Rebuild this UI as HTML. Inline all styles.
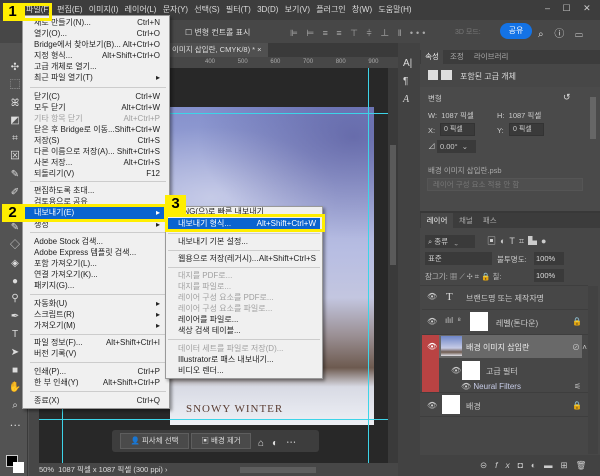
<!DOCTYPE html>
<html><head><meta charset="utf-8"><style>
*{margin:0;padding:0;box-sizing:border-box}
body{width:600px;height:476px;overflow:hidden;background:#535353;font-family:"Liberation Sans","Noto Sans CJK KR",sans-serif;font-size:8px;color:#ddd;position:relative}
.a{position:absolute;white-space:nowrap}
.mi{position:absolute;left:34px;width:126px;height:11px;line-height:11px;color:#222;font-size:8px}
.mi span{position:absolute;right:0}
.sep{position:absolute;height:1px;background:#ccc}
.si{position:absolute;left:178px;height:11px;line-height:11px;color:#222;font-size:8px}
.g{color:#a0a0a0!important}
.y{position:absolute;border:3px solid #ffee00}
.yn{position:absolute;background:#ffee00;color:#000;font-weight:bold;font-size:15px;text-align:center;line-height:18px}
.lt{position:absolute;color:#ccc;font-size:8px}
</style></head><body>
<!-- menubar -->
<div class="a" style="left:0;top:0;width:600px;height:20px;background:#3d3d3d"></div>
<div class="a" style="left:26px;top:4px;color:#ddd;font-size:8px;word-spacing:4px">파일(F) 편집(E) 이미지(I) 레이어(L) 문자(Y) 선택(S) 필터(T) 3D(D) 보기(V) 플러그인 창(W) 도움말(H)</div>
<div class="a" style="left:545px;top:3px;color:#ccc;font-size:9px;word-spacing:10px">– ☐ ✕</div>
<!-- options bar -->
<div class="a" style="left:0;top:20px;width:600px;height:23px;background:#474747"></div>
<div class="a" style="left:185px;top:27px;font-size:8px;color:#ddd">☐ 변형 컨트롤 표시</div>
<div class="a" style="left:290px;top:26px;font-size:9px;color:#aaa;letter-spacing:3px">⊫ ⊨ ≡ ≡ ⊤ ⫩ ⊥ ‖ ••• </div>
<div class="a" style="left:455px;top:27px;font-size:7px;color:#777">3D 모드:</div>
<div class="a" style="left:500px;top:23px;width:32px;height:16px;border-radius:8px;background:#1473e6;color:#fff;text-align:center;line-height:16px;font-size:8px">공유</div>
<div class="a" style="left:538px;top:25px;font-size:10px;color:#ddd;letter-spacing:4px">⌕ ⓘ ▭</div>
<!-- left toolbar -->
<div class="a" style="left:0;top:43px;width:28px;height:433px;background:#535353;border-right:1px solid #3a3a3a"></div>
<div class="a" style="left:8px;top:59px;width:14px;height:390px;overflow:hidden;color:#ddd;font-size:10px;line-height:17.8px;text-align:center">✣<br>⬚<br>ꕤ<br>◩<br>⌗<br>⊠<br>✎<br>✐<br>⊥<br>✎<br>◇<br>◈<br>●<br>⚲<br>✒<br>T<br>➤<br>■<br>✋<br>⌕<br>⋯</div>
<div class="a" style="left:6px;top:455px;width:12px;height:12px;background:#000;border:1px solid #ccc"></div>
<div class="a" style="left:13px;top:462px;width:11px;height:11px;background:#fff"></div>
<!-- doc tab and ruler -->
<div class="a" style="left:29px;top:43px;width:369px;height:14px;background:#3a3a3a"></div>
<div class="a" style="left:160px;top:43px;width:108px;height:14px;background:#505050;color:#ddd;font-size:7.5px;line-height:14px;padding-left:12px">이미지 삽입란, CMYK/8) * ×</div>
<div class="a" style="left:29px;top:57px;width:369px;height:11px;background:#474747;color:#aaa;font-size:6px;line-height:10px;padding-left:176px;word-spacing:21px">400 500 600 700 800 900 1000 1100</div>
<div class="a" style="left:29px;top:68px;width:10px;height:395px;background:#474747"></div>
<!-- canvas -->
<div class="a" style="left:39px;top:68px;width:349px;height:395px;background:#282828"></div>
<div class="a" style="left:170px;top:107px;width:204px;height:318px;background:linear-gradient(180deg,#8490cc 0%,#a3abd9 25%,#b7bde2 45%,#c3c6e0 60%,#9a8f93 72%,#6d5a4f 82%,#d8dae4 88%,#eef0f5 100%)"></div>
<div class="a" style="left:170px;top:107px;width:204px;height:150px;background:radial-gradient(ellipse at 90% 20%,rgba(70,70,140,.55),transparent 60%),radial-gradient(ellipse at 20% 60%,rgba(255,255,255,.35),transparent 55%)"></div>
<div class="a" style="left:186px;top:403px;color:#5a3d33;font-family:'Liberation Serif',serif;font-size:11px;letter-spacing:1px">SNOWY WINTER</div>
<div class="a" style="left:39px;top:113px;width:349px;height:1px;background:#3dd4e8"></div>
<div class="a" style="left:368px;top:68px;width:1px;height:395px;background:#3dd4e8"></div>
<div class="a" style="left:62px;top:68px;width:1px;height:395px;background:#3dd4e8"></div>
<div class="a" style="left:39px;top:419px;width:349px;height:1px;background:#3dd4e8"></div>
<div class="a" style="left:388px;top:68px;width:10px;height:395px;background:#3a3a3a"></div>
<div class="a" style="left:390px;top:145px;width:6px;height:120px;background:#5a5a5a"></div>
<!-- floating bar -->
<div class="a" style="left:112px;top:430px;width:207px;height:22px;background:#3d3d3d;border-radius:3px"></div>
<div class="a" style="left:120px;top:433px;width:69px;height:16px;background:#4a4a4a;border:1px solid #5e5e5e;color:#ddd;font-size:7.5px;line-height:14px;text-align:center">👤 피사체 선택</div>
<div class="a" style="left:191px;top:433px;width:60px;height:16px;background:#4a4a4a;border:1px solid #5e5e5e;color:#ddd;font-size:7.5px;line-height:14px;text-align:center">▣ 배경 제거</div>
<div class="a" style="left:258px;top:434px;color:#ddd;font-size:10px;letter-spacing:8px">⌂◐⋯</div>
<!-- status bar -->
<div class="a" style="left:29px;top:463px;width:369px;height:13px;background:#474747;color:#ddd;font-size:7.5px;line-height:13px;padding-left:10px">50% &nbsp;1087 픽셀 x 1087 픽셀 (300 ppi) ›</div>
<div class="a" style="left:240px;top:467px;width:76px;height:6px;background:#5e5e5e"></div>
<!-- icon strip -->
<div class="a" style="left:398px;top:43px;width:22px;height:433px;background:#424242"></div>
<div class="a" style="left:403px;top:55px;color:#ddd;font-size:10px;line-height:18px">A|<br>¶<br><i style="font-family:'Liberation Serif'">A</i></div>
<!-- properties panel -->
<div class="a" style="left:420px;top:43px;width:180px;height:168px;background:#474747"></div>
<div class="a" style="left:420px;top:50px;width:180px;height:14px;background:#3c3c3c"></div>
<div class="a" style="left:421px;top:50px;width:22px;height:14px;background:#474747;color:#eee;font-size:7.5px;line-height:14px;text-align:center">속성</div>
<div class="a" style="left:450px;top:50px;color:#aaa;font-size:7.5px;line-height:14px;word-spacing:8px">조정 라이브러리</div>
<div class="a" style="left:428px;top:70px;width:10px;height:10px;background:#ddd"></div>
<div class="a" style="left:441px;top:70px;width:11px;height:10px;background:#ddd"></div>
<div class="a" style="left:460px;top:71px;color:#ddd;font-size:8px">포함된 고급 개체</div>
<div class="a" style="left:420px;top:87px;width:180px;height:124px;background:#4a4a4a"></div>
<div class="a" style="left:428px;top:93px;color:#ccc;font-size:7.5px">변형</div>
<div class="a" style="left:563px;top:92px;color:#ddd;font-size:9px">↺</div>
<div class="a" style="left:428px;top:110px;color:#ccc;font-size:7.5px">W: &nbsp;1087 픽셀</div>
<div class="a" style="left:497px;top:110px;color:#ccc;font-size:7.5px">H: &nbsp;1087 픽셀</div>
<div class="a" style="left:428px;top:126px;color:#ccc;font-size:7.5px">X:</div>
<div class="a" style="left:440px;top:123px;width:35px;height:13px;background:#3a3a3a;border:1px solid #333;color:#ccc;font-size:7px;line-height:11px;padding-left:3px">0 픽셀</div>
<div class="a" style="left:497px;top:126px;color:#ccc;font-size:7.5px">Y:</div>
<div class="a" style="left:509px;top:123px;width:35px;height:13px;background:#3a3a3a;border:1px solid #333;color:#ccc;font-size:7px;line-height:11px;padding-left:3px">0 픽셀</div>
<div class="a" style="left:428px;top:141px;color:#ccc;font-size:7.5px">⊿</div>
<div class="a" style="left:437px;top:140px;width:39px;height:13px;background:#3a3a3a;color:#ccc;font-size:7.5px;line-height:13px;padding-left:3px">0.00° &nbsp;⌄</div>
<div class="a" style="left:428px;top:165px;color:#aaa;font-size:7.5px">배경 이미지 삽입란.psb</div>
<div class="a" style="left:427px;top:178px;width:156px;height:13px;background:#4f4f4f;border:1px solid #555;color:#777;font-size:7.5px;line-height:11px;padding-left:5px">레이어 구성 요소 적용 안 함</div>
<div class="a" style="left:590px;top:97px;width:6px;height:42px;background:#666"></div>
<!-- layers panel -->
<div class="a" style="left:420px;top:211px;width:180px;height:2px;background:#383838"></div>
<div class="a" style="left:420px;top:213px;width:180px;height:263px;background:#474747"></div>
<div class="a" style="left:420px;top:213px;width:180px;height:15px;background:#3c3c3c"></div>
<div class="a" style="left:421px;top:213px;width:32px;height:15px;background:#474747;color:#eee;font-size:7.5px;line-height:15px;text-align:center">레이어</div>
<div class="a" style="left:459px;top:213px;color:#aaa;font-size:7.5px;line-height:15px;word-spacing:8px">채널 패스</div>
<div class="a" style="left:425px;top:235px;width:50px;height:13px;background:#3a3a3a;color:#ccc;font-size:7.5px;line-height:13px;padding-left:3px">⌕ 종류 &nbsp;&nbsp;⌄</div>
<div class="a" style="left:487px;top:234px;color:#ccc;font-size:9px;letter-spacing:4px">▣◐T⌗▙●</div>
<div class="a" style="left:425px;top:252px;width:67px;height:13px;background:#3a3a3a;color:#ccc;font-size:7.5px;line-height:13px;padding-left:3px">표준</div>
<div class="a" style="left:497px;top:254px;color:#ccc;font-size:7.5px">불투명도:</div>
<div class="a" style="left:534px;top:252px;width:30px;height:13px;background:#3a3a3a;color:#ddd;font-size:7.5px;line-height:13px;padding-left:2px">100%</div>
<div class="a" style="left:425px;top:271px;color:#bbb;font-size:7.5px">잠그기: ▦ ⟋ ✣ ⌗ 🔒 칠:</div>
<div class="a" style="left:534px;top:269px;width:30px;height:13px;background:#3a3a3a;color:#ddd;font-size:7.5px;line-height:13px;padding-left:2px">100%</div>
<div class="a" style="left:420px;top:285px;width:168px;height:1px;background:#3e3e3e"></div>
<!-- rows -->
<div class="a" style="left:422px;top:286px;width:166px;height:24px;border-bottom:1px solid #3e3e3e"></div>
<div class="lt" style="left:427px;top:292px">👁</div>
<div class="a" style="left:446px;top:291px;color:#ddd;font-size:11px;font-family:'Liberation Serif'">T</div>
<div class="lt" style="left:466px;top:293px">브랜드명 또는 제작자명</div>
<div class="a" style="left:422px;top:310px;width:166px;height:25px;border-bottom:1px solid #3e3e3e"></div>
<div class="lt" style="left:427px;top:317px">👁</div>
<div class="lt" style="left:445px;top:316px">ılıl &nbsp;⁸</div>
<div class="a" style="left:470px;top:312px;width:18px;height:19px;background:#fff"></div>
<div class="lt" style="left:496px;top:318px">레벨(톤다운)</div>
<div class="lt" style="left:572px;top:317px">🔒</div>
<div class="a" style="left:422px;top:335px;width:17px;height:57px;background:#b94343"></div>
<div class="a" style="left:439px;top:335px;width:143px;height:23px;background:#696969"></div>
<div class="lt" style="left:427px;top:342px;color:#fff">👁</div>
<div class="a" style="left:441px;top:336px;width:21px;height:20px;background:linear-gradient(#6f86c8,#c6cbe6 60%,#6d5a4f 80%,#e0e0e8)"></div>
<div class="lt" style="left:466px;top:342px;color:#eee">배경 이미지 삽입란</div>
<div class="lt" style="left:572px;top:342px">⊘ ˄</div>
<div class="lt" style="left:451px;top:366px">👁</div>
<div class="a" style="left:462px;top:361px;width:18px;height:19px;background:#fff"></div>
<div class="lt" style="left:486px;top:366px">고급 필터</div>
<div class="lt" style="left:461px;top:382px">👁 <span style="color:#c8cde8">Neural Filters</span></div>
<div class="lt" style="left:574px;top:382px">⚟</div>
<div class="a" style="left:420px;top:392px;width:168px;height:1px;background:#3e3e3e"></div>
<div class="lt" style="left:427px;top:401px">👁</div>
<div class="a" style="left:442px;top:395px;width:18px;height:19px;background:#fff"></div>
<div class="lt" style="left:466px;top:401px">배경</div>
<div class="lt" style="left:572px;top:401px">🔒</div>
<div class="a" style="left:420px;top:416px;width:168px;height:1px;background:#3e3e3e"></div>
<div class="a" style="left:420px;top:455px;width:180px;height:21px;background:#424242;color:#ccc;font-size:8.5px;line-height:20px;padding-left:60px;letter-spacing:8px">⊝<i>fx</i>◘◐▬⊞🗑</div>
<div class="a" style="left:588px;top:286px;width:10px;height:168px;background:#424242"></div>
<!-- file menu -->
<div class="a" style="left:22px;top:15px;width:148px;height:394px;background:#f0f0f0;border:1px solid #999;box-shadow:2px 2px 3px rgba(0,0,0,.4)"></div>
<div class="mi" style="top:17px">새로 만들기(N)...<span>Ctrl+N</span></div>
<div class="mi" style="top:28px">열기(O)...<span>Ctrl+O</span></div>
<div class="mi" style="top:39px">Bridge에서 찾아보기(B)...<span>Alt+Ctrl+O</span></div>
<div class="mi" style="top:50px">지정 형식...<span>Alt+Shift+Ctrl+O</span></div>
<div class="mi" style="top:61px">고급 개체로 열기...</div>
<div class="mi" style="top:72px">최근 파일 열기(T)<span>▸</span></div>
<div class="sep" style="left:30px;top:87px;width:136px"></div>
<div class="mi" style="top:91px">닫기(C)<span>Ctrl+W</span></div>
<div class="mi" style="top:102px">모두 닫기<span>Alt+Ctrl+W</span></div>
<div class="mi g" style="top:113px">기타 항목 닫기<span>Alt+Ctrl+P</span></div>
<div class="mi" style="top:124px">닫은 후 Bridge로 이동...<span>Shift+Ctrl+W</span></div>
<div class="mi" style="top:135px">저장(S)<span>Ctrl+S</span></div>
<div class="mi" style="top:146px">다른 이름으로 저장(A)...<span>Shift+Ctrl+S</span></div>
<div class="mi" style="top:157px">사본 저장...<span>Alt+Ctrl+S</span></div>
<div class="mi" style="top:168px">되돌리기(V)<span>F12</span></div>
<div class="sep" style="left:30px;top:181px;width:136px"></div>
<div class="mi" style="top:185px">편집하도록 초대...</div>
<div class="mi" style="top:196px">검토용으로 공유</div>
<div class="a" style="left:24px;top:207px;width:144px;height:12px;background:#0a64d0"></div>
<div class="mi" style="top:207px;color:#fff">내보내기(E)<span>▸</span></div>
<div class="mi" style="top:219px">생성<span>▸</span></div>
<div class="sep" style="left:30px;top:232px;width:136px"></div>
<div class="mi" style="top:236px">Adobe Stock 검색...</div>
<div class="mi" style="top:247px">Adobe Express 템플릿 검색...</div>
<div class="mi" style="top:258px">포함 가져오기(L)...</div>
<div class="mi" style="top:269px">연결 가져오기(K)...</div>
<div class="mi" style="top:280px">패키지(G)...</div>
<div class="sep" style="left:30px;top:294px;width:136px"></div>
<div class="mi" style="top:298px">자동화(U)<span>▸</span></div>
<div class="mi" style="top:309px">스크립트(R)<span>▸</span></div>
<div class="mi" style="top:320px">가져오기(M)<span>▸</span></div>
<div class="sep" style="left:30px;top:334px;width:136px"></div>
<div class="mi" style="top:337px">파일 정보(F)...<span>Alt+Shift+Ctrl+I</span></div>
<div class="mi" style="top:348px">버전 기록(V)</div>
<div class="sep" style="left:30px;top:362px;width:136px"></div>
<div class="mi" style="top:366px">인쇄(P)...<span>Ctrl+P</span></div>
<div class="mi" style="top:377px">한 부 인쇄(Y)<span>Alt+Shift+Ctrl+P</span></div>
<div class="sep" style="left:30px;top:391px;width:136px"></div>
<div class="mi" style="top:395px">종료(X)<span>Ctrl+Q</span></div>
<!-- submenu -->
<div class="a" style="left:165px;top:206px;width:158px;height:173px;background:#f0f0f0;border:1px solid #999;box-shadow:2px 2px 3px rgba(0,0,0,.4)"></div>
<div class="si" style="top:206px">PNG(으)로 빠른 내보내기</div>
<div class="a" style="left:168px;top:218px;width:152px;height:12px;background:#0a64d0"></div>
<div class="si" style="top:218px;color:#fff;width:138px">내보내기 형식...<span style="position:absolute;right:0">Alt+Shift+Ctrl+W</span></div>
<div class="sep" style="left:168px;top:233px;width:152px"></div>
<div class="si" style="top:236px">내보내기 기본 설정...</div>
<div class="sep" style="left:168px;top:250px;width:152px"></div>
<div class="si" style="top:253px;width:138px">웹용으로 저장(레거시)...<span style="position:absolute;right:0">Alt+Shift+Ctrl+S</span></div>
<div class="sep" style="left:168px;top:267px;width:152px"></div>
<div class="si g" style="top:270px">대지를 PDF로...</div>
<div class="si g" style="top:281px">대지를 파일로...</div>
<div class="si g" style="top:292px">레이어 구성 요소를 PDF로...</div>
<div class="si g" style="top:303px">레이어 구성 요소를 파일로...</div>
<div class="si" style="top:314px">레이어를 파일로...</div>
<div class="si" style="top:325px">색상 검색 테이블...</div>
<div class="sep" style="left:168px;top:339px;width:152px"></div>
<div class="si g" style="top:343px">데이터 세트를 파일로 저장(D)...</div>
<div class="si" style="top:354px">Illustrator로 패스 내보내기...</div>
<div class="si" style="top:365px">비디오 렌더...</div>
<!-- yellow annotations -->
<div class="y" style="left:22px;top:3px;width:30px;height:18px"></div>
<div class="yn" style="left:3px;top:3px;width:19px;height:18px">1</div>
<div class="y" style="left:22px;top:204px;width:145px;height:18px"></div>
<div class="yn" style="left:2px;top:204px;width:21px;height:18px">2</div>
<div class="y" style="left:165px;top:214px;width:160px;height:18px"></div>
<div class="yn" style="left:165px;top:195px;width:21px;height:19px">3</div>
</body></html>
